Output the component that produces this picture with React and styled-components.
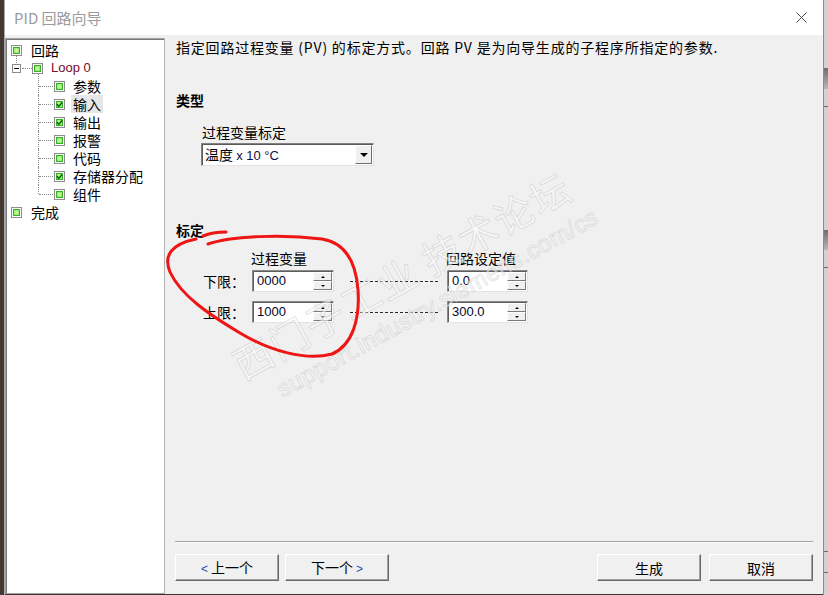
import React from "react";
import styled, { createGlobalStyle } from "styled-components";

const GlobalStyle = createGlobalStyle`
  html, body {
    margin: 0;
    padding: 0;
    background: #3c3430;
  }
  body {
    font-family: "Noto Sans CJK SC", "Liberation Sans", sans-serif;
    font-size: 14px;
    color: #000;
  }
`;

const Screen = styled.div`
  position: relative;
  width: 828px;
  height: 595px;
  display: flex;
  overflow: hidden;
  background: #3c3430;
`;

const LeftEdge = styled.div`
  width: 4px;
  background: #433731;
  border-right: 1px solid #a8a8a8;
`;

const RightEdge = styled.div`
  width: 5px;
  display: flex;
  flex-direction: column;
  background: #d2d2d2;
  border-left: 1px solid #8c8c8c;
  box-sizing: border-box;
`;

const EdgeTab = styled.div`
  margin-top: ${(p) => p.$top}px;
  height: ${(p) => p.$h}px;
  background: ${(p) =>
    p.$h > 1 ? "linear-gradient(#6e6e6e, #b8b8b8)" : "#6a6a6a"};
`;

const Window = styled.div`
  flex: 1;
  height: 594px;
  display: flex;
  flex-direction: column;
  background: #f0f0f0;
`;

const TitleBar = styled.div`
  height: 35px;
  flex: none;
  display: flex;
  align-items: center;
  justify-content: space-between;
  padding: 0 16px 0 9px;
  background: #fff;
`;

const Title = styled.span`
  font-size: 15px;
  color: #9b9b9b;
  line-height: 20px;
`;

const CloseIcon = () => (
  <svg width="11" height="11" viewBox="0 0 11 11">
    <path d="M0.5 0.5 L10.5 10.5 M10.5 0.5 L0.5 10.5" stroke="#4a4a4a" strokeWidth="1" />
  </svg>
);

const Body = styled.div`
  flex: 1;
  display: flex;
  min-height: 0;
`;

const Tree = styled.div`
  width: 160px;
  margin-top: 3px;
  box-sizing: border-box;
  background: #fff;
  border: 1px solid #a0a0a0;
  border-right-color: #b4b4b4;
  box-shadow: inset 1px 1px 0 #7a7a7a;
  padding: 2px 0 0 0;
`;

const TreeRow = styled.div`
  display: flex;
  align-items: center;
  height: 18px;
  padding-left: ${(p) => p.$indent || 0}px;
`;

const NodeBox = styled.span`
  flex: none;
  width: 11px;
  height: 11px;
  box-sizing: border-box;
  border: 1px solid #8d8d8d;
  background: #fff;
  padding: 1px;
  display: flex;
`;

const NodeFill = styled.span`
  flex: 1;
  display: flex;
  align-items: center;
  justify-content: center;
  background: radial-gradient(circle at 50% 50%, #d8ffb0 0%, #93ea62 55%, #3dbd2a 100%);
  box-shadow: inset 0 0 0 1px #34b22a;
`;

const NodeIcon = ({ checked }) => (
  <NodeBox>
    <NodeFill>
      {checked && (
        <svg width="7" height="7" viewBox="0 0 7 7">
          <path d="M1 3.3 L2.8 5.2 L6.2 1.4" fill="none" stroke="#0b5a12" strokeWidth="1.5" />
        </svg>
      )}
    </NodeFill>
  </NodeBox>
);

const NodeLabel = styled.span`
  margin-left: ${(p) => p.$gap || 6}px;
  padding: 0 2px;
  height: 18px;
  line-height: 18px;
  overflow: hidden;
  white-space: nowrap;
  font-size: ${(p) => (p.$latin ? "13px" : "14px")};
  font-family: ${(p) =>
    p.$latin ? '"Liberation Sans", sans-serif' : '"Noto Sans CJK SC", sans-serif'};
  color: ${(p) => p.$color || "#000"};
  background: ${(p) => (p.$selected ? "#e6e6e6" : "transparent")};
`;

const LoopLead = styled.div`
  position: relative;
  width: 26px;
  height: 18px;
  box-sizing: border-box;
  padding-left: 6px;
  display: flex;
  align-items: center;

  &::before {
    content: "";
    position: absolute;
    left: 10px;
    top: -3px;
    height: 7px;
    border-left: 1px dotted #8a8a8a;
  }
`;

const ExpandBox = styled.span`
  flex: none;
  width: 9px;
  height: 9px;
  box-sizing: border-box;
  border: 1px solid #8c8c8c;
  background: #fff;
  display: flex;
  align-items: center;
  justify-content: center;

  &::after {
    content: "";
    width: 5px;
    height: 1px;
    background: #000;
  }
`;

const DotLine = styled.span`
  flex: 1;
  margin-left: 1px;
  border-top: 1px dotted #8a8a8a;
`;

const ChildLead = styled.div`
  position: relative;
  width: 48px;
  height: 18px;

  &::before {
    content: "";
    position: absolute;
    left: 32px;
    top: ${(p) => (p.$first ? "-4px" : "0")};
    height: ${(p) => (p.$last ? "9px" : p.$first ? "22px" : "18px")};
    border-left: 1px dotted #8a8a8a;
  }
  &::after {
    content: "";
    position: absolute;
    left: 33px;
    width: 14px;
    top: 9px;
    border-top: 1px dotted #8a8a8a;
  }
`;

const Content = styled.div`
  flex: 1;
  display: flex;
  flex-direction: column;
  padding: 0 10px 13px 10px;
  min-width: 0;
`;

const Description = styled.div`
  margin-top: 3px;
  padding-left: 1px;
  line-height: 18px;
  letter-spacing: 0.8px;
  white-space: nowrap;
`;

const SectionTitle = styled.div`
  margin-top: ${(p) => p.$top}px;
  padding-left: 1px;
  line-height: 18px;
  font-weight: bold;
`;

const FieldLabel = styled.div`
  margin-top: 14px;
  margin-left: 27px;
  line-height: 18px;
`;

const Select = styled.div`
  margin-top: 2px;
  margin-left: 26px;
  width: 173px;
  height: 23px;
  box-sizing: border-box;
  display: flex;
  background: #fff;
  border: 1px solid;
  border-color: #828282 #e3e3e3 #e3e3e3 #828282;
  box-shadow: inset 1px 1px 0 #5a5a5a;
`;

const SelectValue = styled.span`
  flex: 1;
  padding-left: 3px;
  line-height: 20px;
  font-size: 14px;
  white-space: nowrap;
`;

const Latin = styled.span`
  font-family: "Liberation Sans", sans-serif;
  font-size: 13px;
  color: #10104a;
`;

const SelectButton = styled.span`
  width: 17px;
  margin: 1px 1px 1px 0;
  box-sizing: border-box;
  display: flex;
  align-items: center;
  justify-content: center;
  background: #f0f0f0;
  border: 1px solid;
  border-color: #fff #6d6d6d #6d6d6d #fff;

  &::after {
    content: "";
    border-left: 4px solid transparent;
    border-right: 4px solid transparent;
    border-top: 4px solid #000;
  }
`;

const ScaleGrid = styled.div`
  margin-left: 28px;
  display: grid;
  grid-template-columns: 49px 82px 113px 81px;
  align-items: center;
`;

const HeaderGrid = styled(ScaleGrid)`
  margin-top: 10px;
  line-height: 18px;
`;

const RowGrid = styled(ScaleGrid)`
  margin-top: ${(p) => p.$top}px;
  height: 22px;
`;

const HeaderCell = styled.span`
  grid-column: ${(p) => p.$col};
  margin-left: -1px;
  white-space: nowrap;
`;

const RowLabel = styled.span`
  white-space: nowrap;
`;

const SpinBox = styled.div`
  height: 22px;
  box-sizing: border-box;
  display: flex;
  background: #fff;
  border: 1px solid;
  border-color: #8a8a8a #e3e3e3 #e3e3e3 #8a8a8a;
  box-shadow: inset 1px 1px 0 #5e5e5e;
`;

const SpinValue = styled.span`
  flex: 1;
  padding-left: 4px;
  line-height: 20px;
  font-family: "Liberation Sans", sans-serif;
  font-size: 13px;
  color: #06062a;
`;

const SpinButtons = styled.span`
  width: 19px;
  margin: 1px 1px 1px 0;
  display: flex;
  flex-direction: column;
`;

const SpinHalf = styled.span`
  flex: 1;
  display: flex;
  align-items: center;
  justify-content: center;
  background: #f0f0f0;
  border: 1px solid;
  border-color: #fff #7a7a7a #7a7a7a #fff;

  &::after {
    content: "";
    border-left: 2px solid transparent;
    border-right: 2px solid transparent;
    ${(p) => (p.$down ? "border-top: 2px solid #000;" : "border-bottom: 2px solid #000;")}
  }
`;

const Dashes = styled.span`
  height: 1px;
  margin: 0 8px 0 16px;
  background: repeating-linear-gradient(to right, #2a2a2a 0 3px, transparent 3px 5px);
`;

const Footer = styled.div`
  margin-top: auto;
  display: flex;
  flex-direction: column;
`;

const Separator = styled.div`
  border-top: 1px solid #a0a0a0;
  border-bottom: 1px solid #fff;
`;

const ButtonRow = styled.div`
  margin-top: 11px;
  display: flex;
  gap: 6px;
`;

const Button = styled.button`
  width: 104px;
  height: 27px;
  margin-left: ${(p) => (p.$push ? "auto" : "0")};
  margin-right: ${(p) => (p.$gapRight ? "2px" : "0")};
  padding: 0;
  background: #f0f0f0;
  border: 1px solid;
  border-color: #fff #696969 #696969 #fff;
  box-shadow: inset -1px -1px 0 #a0a0a0;
  font-family: "Noto Sans CJK SC", sans-serif;
  font-size: 14px;
  color: #000;
  line-height: 18px;
`;

const Arrow = styled.span`
  font-family: "Liberation Sans", sans-serif;
  font-size: 12px;
  color: #2a4ab0;
`;

const Overlay = styled.svg`
  position: absolute;
  left: 0;
  top: 0;
  pointer-events: none;
`;

const Watermark = styled.div`
  position: absolute;
  left: 224px;
  top: 346px;
  transform: rotate(-29deg);
  transform-origin: 0 0;
  pointer-events: none;
  white-space: nowrap;
`;

const MarkLine = styled.div`
  font-family: ${(p) =>
    p.$latin ? '"Liberation Sans", sans-serif' : '"Noto Sans CJK SC", sans-serif'};
  font-size: ${(p) => (p.$latin ? "24px" : "39px")};
  line-height: ${(p) => (p.$latin ? "28px" : "46px")};
  margin-left: ${(p) => (p.$latin ? "26px" : "0")};
  margin-top: ${(p) => (p.$latin ? "6px" : "0")};
  color: rgba(255, 255, 255, 0.55);
  -webkit-text-stroke: 1px rgba(175, 175, 175, 0.35);
  letter-spacing: ${(p) => (p.$latin ? "0.5px" : "2px")};
`;

const children = [
  { label: "参数" },
  { label: "输入", checked: true, selected: true },
  { label: "输出", checked: true },
  { label: "报警" },
  { label: "代码" },
  { label: "存储器分配", checked: true },
  { label: "组件" },
];

const limits = [
  { label: "下限：", pv: "0000", sp: "0.0", top: 3 },
  { label: "上限：", pv: "1000", sp: "300.0", top: 9 },
];

const Spin = ({ value }) => (
  <SpinBox>
    <SpinValue>{value}</SpinValue>
    <SpinButtons>
      <SpinHalf />
      <SpinHalf $down />
    </SpinButtons>
  </SpinBox>
);

export default function App() {
  return (
    <>
      <GlobalStyle />
      <Screen>
        <LeftEdge />
        <Window>
          <TitleBar>
            <Title>PID 回路向导</Title>
            <CloseIcon />
          </TitleBar>
          <Body>
            <Tree>
              <TreeRow $indent={5}>
                <NodeIcon />
                <NodeLabel $gap={7}>回路</NodeLabel>
              </TreeRow>
              <TreeRow>
                <LoopLead>
                  <ExpandBox />
                  <DotLine />
                </LoopLead>
                <NodeIcon />
                <NodeLabel $latin $color="#7a0a2a">Loop 0</NodeLabel>
              </TreeRow>
              {children.map((c, i) => (
                <TreeRow key={c.label}>
                  <ChildLead $first={i === 0} $last={i === children.length - 1} />
                  <NodeIcon checked={c.checked} />
                  <NodeLabel $selected={c.selected}>{c.label}</NodeLabel>
                </TreeRow>
              ))}
              <TreeRow $indent={5}>
                <NodeIcon />
                <NodeLabel $gap={7}>完成</NodeLabel>
              </TreeRow>
            </Tree>

            <Content>
              <Description>
                指定回路过程变量 (PV) 的标定方式。回路 PV 是为向导生成的子程序所指定的参数.
              </Description>

              <SectionTitle $top={35}>类型</SectionTitle>
              <FieldLabel>过程变量标定</FieldLabel>
              <Select>
                <SelectValue>
                  温度 <Latin>x 10 °C</Latin>
                </SelectValue>
                <SelectButton />
              </Select>

              <SectionTitle $top={55}>标定</SectionTitle>
              <HeaderGrid>
                <HeaderCell $col={2}>过程变量</HeaderCell>
                <HeaderCell $col={4}>回路设定值</HeaderCell>
              </HeaderGrid>
              {limits.map((r) => (
                <RowGrid key={r.label} $top={r.top}>
                  <RowLabel>{r.label}</RowLabel>
                  <Spin value={r.pv} />
                  <Dashes />
                  <Spin value={r.sp} />
                </RowGrid>
              ))}

              <Footer>
                <Separator />
                <ButtonRow>
                  <Button>
                    <Arrow>&lt;</Arrow> 上一个
                  </Button>
                  <Button>
                    下一个 <Arrow>&gt;</Arrow>
                  </Button>
                  <Button $push $gapRight>生成</Button>
                  <Button>取消</Button>
                </ButtonRow>
              </Footer>
            </Content>
          </Body>
        </Window>
        <RightEdge>
          <EdgeTab $top={68} $h={21} />
          <EdgeTab $top={17} $h={1} />
          <EdgeTab $top={123} $h={20} />
          <EdgeTab $top={17} $h={1} />
          <EdgeTab $top={283} $h={1} />
          <EdgeTab $top={20} $h={1} />
        </RightEdge>

        <Watermark>
          <MarkLine>西门子工业 技术论坛</MarkLine>
          <MarkLine $latin>support.industry.siemens.com/cs</MarkLine>
        </Watermark>

        <Overlay width="828" height="595" viewBox="0 0 828 595">
          <g fill="none" stroke="#ee1515" strokeWidth="3" strokeLinecap="round" strokeLinejoin="round">
            <path d="M203 236 C210 233 218 232 226 232" />
            <path d="M208 244 C232 236 282 234 322 239 C346 243 356 262 358 290 C360 318 353 345 332 354 C306 361 270 351 240 333 C210 315 181 296 170 272 C163 255 172 244 196 239" />
          </g>
        </Overlay>
      </Screen>
    </>
  );
}
